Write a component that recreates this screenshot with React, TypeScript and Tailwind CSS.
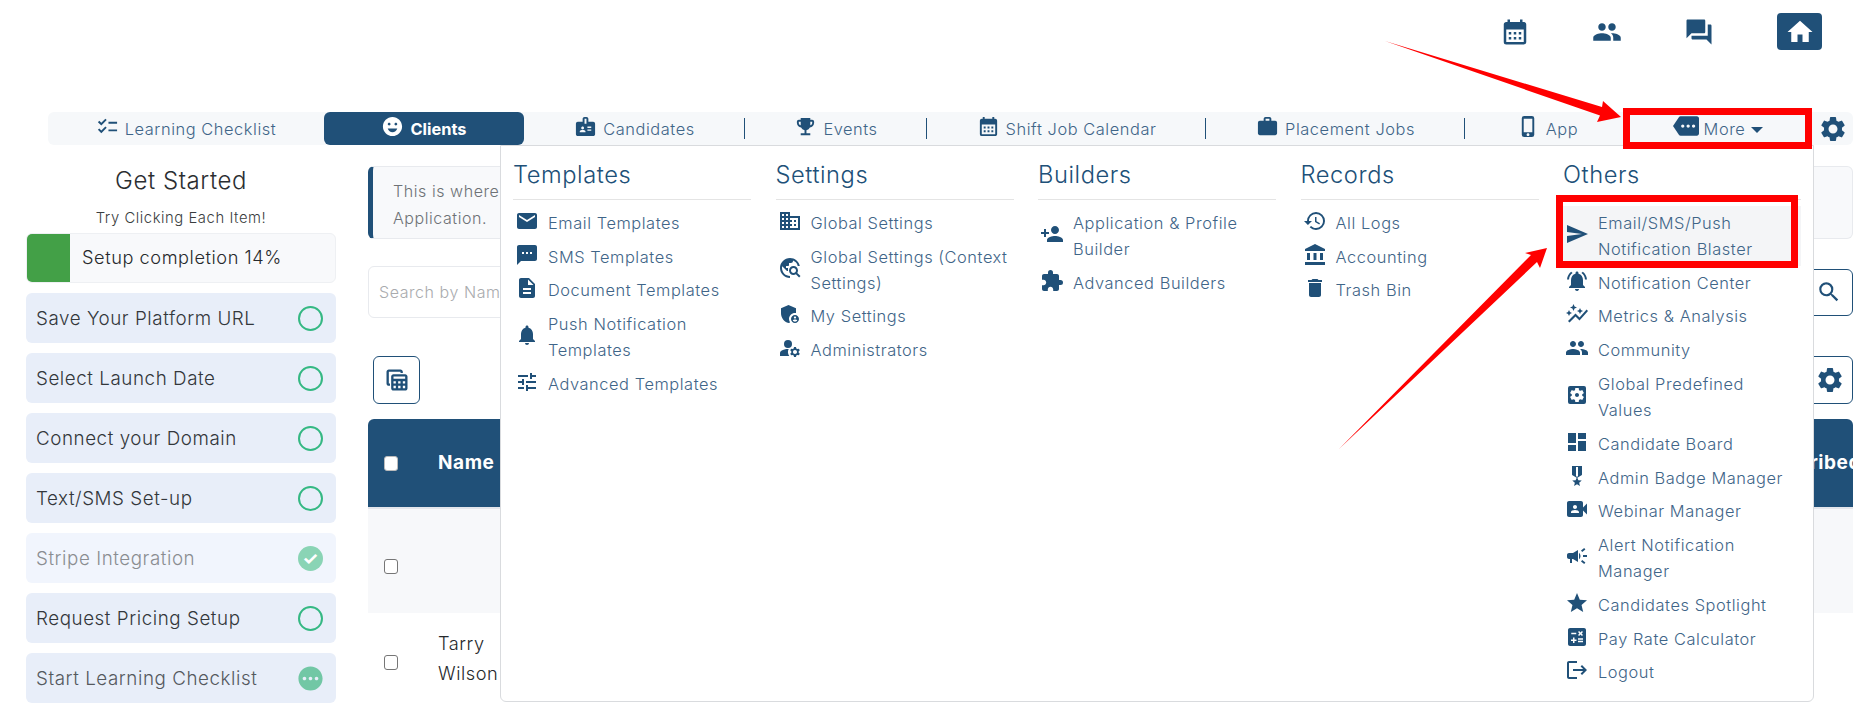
import type { ReactNode } from 'react';
import {
  MdAccountBalance,
  MdAdminPanelSettings,
  MdAutoGraph,
  MdBadge,
  MdCalculate,
  MdCalendarMonth,
  MdCampaign,
  MdChecklist,
  MdDashboard,
  MdDelete,
  MdDescription,
  MdDomain,
  MdEmail,
  MdEmojiEmotions,
  MdEmojiEvents,
  MdExtension,
  MdForum,
  MdHistory,
  MdHome,
  MdLogout,
  MdManageAccounts,
  MdMilitaryTech,
  MdMore,
  MdNotifications,
  MdNotificationsActive,
  MdOutlineTableView,
  MdPending,
  MdPeople,
  MdPersonAdd,
  MdPhoneIphone,
  MdSearch,
  MdSend,
  MdSettings,
  MdSettingsApplications,
  MdSms,
  MdStar,
  MdTravelExplore,
  MdTune,
  MdVideoCameraFront,
  MdWork,
} from 'react-icons/md';

type MenuItem = { icon: ReactNode; label: string; hover?: boolean };

const menu: { title: string; items: MenuItem[] }[] = [
  {
    title: 'Templates',
    items: [
      { icon: <MdEmail />, label: 'Email Templates' },
      { icon: <MdSms />, label: 'SMS Templates' },
      { icon: <MdDescription />, label: 'Document Templates' },
      { icon: <MdNotifications />, label: 'Push Notification Templates' },
      { icon: <MdTune />, label: 'Advanced Templates' },
    ],
  },
  {
    title: 'Settings',
    items: [
      { icon: <MdDomain />, label: 'Global Settings' },
      { icon: <MdTravelExplore />, label: 'Global Settings (Context Settings)' },
      { icon: <MdAdminPanelSettings />, label: 'My Settings' },
      { icon: <MdManageAccounts />, label: 'Administrators' },
    ],
  },
  {
    title: 'Builders',
    items: [
      { icon: <MdPersonAdd />, label: 'Application & Profile Builder' },
      { icon: <MdExtension />, label: 'Advanced Builders' },
    ],
  },
  {
    title: 'Records',
    items: [
      { icon: <MdHistory />, label: 'All Logs' },
      { icon: <MdAccountBalance />, label: 'Accounting' },
      { icon: <MdDelete />, label: 'Trash Bin' },
    ],
  },
  {
    title: 'Others',
    items: [
      { icon: <MdSend />, label: 'Email/SMS/Push Notification Blaster', hover: true },
      { icon: <MdNotificationsActive />, label: 'Notification Center' },
      { icon: <MdAutoGraph />, label: 'Metrics & Analysis' },
      { icon: <MdPeople />, label: 'Community' },
      { icon: <MdSettingsApplications />, label: 'Global Predefined Values' },
      { icon: <MdDashboard />, label: 'Candidate Board' },
      { icon: <MdMilitaryTech />, label: 'Admin Badge Manager' },
      { icon: <MdVideoCameraFront />, label: 'Webinar Manager' },
      { icon: <MdCampaign />, label: 'Alert Notification Manager' },
      { icon: <MdStar />, label: 'Candidates Spotlight' },
      { icon: <MdCalculate />, label: 'Pay Rate Calculator' },
      { icon: <MdLogout />, label: 'Logout' },
    ],
  },
];

const tabs = [
  { icon: <MdChecklist />, label: 'Learning Checklist', width: 'w-[276px]' },
  { icon: <MdEmojiEmotions />, label: 'Clients', width: 'w-[200px]', active: true },
  { icon: <MdBadge />, label: 'Candidates', width: 'w-[221px]', line: true },
  { icon: <MdEmojiEvents />, label: 'Events', width: 'w-[182px]', line: true },
  { icon: <MdCalendarMonth />, label: 'Shift Job Calendar', width: 'w-[279px]', line: true },
  { icon: <MdWork />, label: 'Placement Jobs', width: 'w-[259px]', line: true },
  { icon: <MdPhoneIphone />, label: 'App', width: 'w-[165px]' },
];

const steps = [
  { label: 'Save Your Platform URL', state: 'open' },
  { label: 'Select Launch Date', state: 'open' },
  { label: 'Connect your Domain', state: 'open' },
  { label: 'Text/SMS Set-up', state: 'open' },
  { label: 'Stripe Integration', state: 'done' },
  { label: 'Request Pricing Setup', state: 'open' },
  { label: 'Start Learning Checklist', state: 'pending' },
];

function Step({ label, state }: { label: string; state: string }) {
  return (
    <div
      className={`flex h-[50px] items-center justify-between rounded-md pl-[10px] pr-[13px] text-[18.8px] ${
        state === 'done' ? 'bg-[#f1f5fd] text-[#8a8d91]' : state === 'pending' ? 'bg-[#e8eef9] text-[#55595e]' : 'bg-[#e8eef9] text-[#33373b]'
      }`}
    >
      <span className="pt-[2px]">{label}</span>
      {state === 'open' && <span className="h-[25px] w-[25px] rounded-full border-[2.5px] border-[#35b883]" />}
      {state === 'done' && <span className="flex h-[25px] w-[25px] items-center justify-center rounded-full bg-[#8ad4b5] text-[18px] font-bold text-white">✓</span>}
      {state === 'pending' && <MdPending className="-mx-[2px] text-[29px] text-[#72c7a5]" />}
    </div>
  );
}

function Sidebar() {
  return (
    <aside className="w-[310px] shrink-0">
      <h2 className="mt-[21px] text-center text-[24px] leading-[30px] text-[#2b2e31]">Get Started</h2>
      <p className="mt-[12px] text-center text-[14.8px] leading-[20px] text-[#3a3d40]">Try Clicking Each Item!</p>
      <div className="mb-[10px] mt-[5px] flex h-[50px] items-center overflow-hidden rounded-md border border-[#eef0f3] bg-[#f8f9fb] text-[18.2px] text-[#26292c]">
        <div className="h-full w-[43px] bg-[#43a047]" />
        <span className="ml-3">Setup completion 14%</span>
      </div>
      <div className="flex flex-col gap-[10px]">
        {steps.map((s) => (
          <Step key={s.label} label={s.label} state={s.state} />
        ))}
      </div>
    </aside>
  );
}

function Main() {
  return (
    <main className="ml-[32px] min-w-0 flex-1 pt-[21px]">
      <div className="h-[73px] rounded-md border border-l-[5px] border-[#e8eaee] border-l-[#205078] bg-[#f8f9fb] px-[20px] py-[11px] text-[16px] leading-[27px] text-[#6e7276]">
        This is where you can see each Client's
        <br />
        Application.
      </div>
      <div className="mt-[27px] flex h-[52px] items-center">
        <div className="flex h-full flex-1 items-center rounded-md border border-[#e8eaee] pl-[10px] text-[16px] text-[#a9abae]">Search by Name</div>
        <div className="flex h-[47px] w-[48px] items-center justify-center rounded-md border border-[#205078] text-[26px] text-[#205078]">
          <MdSearch />
        </div>
      </div>
      <div className="mt-[38px] flex h-[48px] items-center justify-between px-[5px] pr-0">
        <div className="flex h-full w-[47px] items-center justify-center rounded-md border border-[#205078] text-[28px] text-[#205078]">
          <MdOutlineTableView />
        </div>
        <div className="flex h-full w-[47px] items-center justify-center rounded-md border border-[#205078] text-[30px] text-[#205078]">
          <MdSettings />
        </div>
      </div>
      <div className="mt-[15px] overflow-hidden rounded-t-md">
        <div className="flex h-[90px] items-center justify-between border-b-2 border-[#e3e6ec] bg-[#205078] pl-[16px] text-[19px] font-bold text-white">
          <div className="flex items-center">
            <span className="h-[15px] w-[14px] rounded-[3px] border border-[#bbb] bg-white" />
            <span className="ml-[40px]">Name</span>
          </div>
          <span className="-mr-[8px]">Subscribed</span>
        </div>
        <div className="flex h-[104px] items-center bg-[#f7f8fa] pl-[16px] pt-[11px]">
          <span className="h-[15px] w-[14px] rounded-[3px] border border-[#767676] bg-white" />
        </div>
        <div className="flex h-[90px] items-center pl-[16px] text-[18.2px] leading-[30px] text-[#26292c]">
          <span className="mt-[8px] h-[15px] w-[14px] rounded-[3px] border border-[#767676] bg-white" />
          <span className="ml-[40px] w-[70px]">Tarry Wilson</span>
        </div>
      </div>
    </main>
  );
}

function MegaMenu() {
  return (
    <div className="absolute left-[500px] top-[145px] flex h-[557px] w-[1314px] justify-between rounded-b-md border border-[#d9dbde] bg-white pl-[12px] pr-[12px]">
      {menu.map((col) => (
        <div key={col.title} className="w-[238px]">
          <h3 className="border-b border-[#e4e4e4] pb-[8px] pt-[13px] text-[23.7px] leading-[32px] text-[#205078]">{col.title}</h3>
          <ul className="mt-[6px]">
            {col.items.map((it) => (
              <li
                key={it.label}
                className={`flex items-center gap-[9px] px-[2px] py-[3.9px] text-[16.4px] leading-[26px] text-[#3f6588] ${it.hover ? 'bg-[#f4f5f7]' : ''}`}
              >
                <span className="-mt-[4px] shrink-0 text-[24px] text-[#205078]">{it.icon}</span>
                <span className="max-w-[200px]">{it.label}</span>
              </li>
            ))}
          </ul>
        </div>
      ))}
    </div>
  );
}

// the two red call-outs drawn on top of the screenshot
function Annotations() {
  return (
    <svg className="pointer-events-none absolute left-0 top-0" width="1860" height="716">
      <polygon points="1385,41 1602,107 1603,101 1621,117 1597,122 1600,115.5" fill="#ff0000" />
      <polygon points="1339,449 1531,255 1525,253 1547,248 1540,268 1537,262" fill="#ff0000" />
      <rect x="1626.5" y="111.5" width="182" height="34" fill="none" stroke="#ff0000" strokeWidth="7" />
      <rect x="1559.5" y="198.5" width="235" height="66" fill="none" stroke="#ff0000" strokeWidth="7" />
    </svg>
  );
}

export default function App() {
  return (
    <div className="relative h-[716px] w-[1860px] overflow-hidden bg-white font-['Inter',sans-serif] font-light tracking-[0.035em]">
      <header className="flex h-[112px] items-start justify-end pr-[38px] pt-[13px] text-[#205078]">
        <div className="flex h-[37px] items-center gap-[62px] text-[30px]">
          <MdCalendarMonth />
          <MdPeople />
          <MdForum />
          <div className="ml-[1px] flex h-[37px] w-[45px] items-center justify-center rounded-[4px] bg-[#205078] text-[30px] text-white">
            <MdHome />
          </div>
        </div>
      </header>

      <nav className="ml-[48px] mr-[7px] flex h-[33px] items-stretch rounded-md bg-[#f6f8fa] text-[16.4px] text-[#3f6588]">
        {tabs.map((t) => (
          <div
            key={t.label}
            className={`relative flex items-center justify-center gap-[6px] ${t.width} ${t.active ? 'rounded-md bg-[#205078] font-bold tracking-normal text-white' : ''}`}
          >
            <span className={`-mt-[5px] text-[23px] ${t.active ? 'text-white' : 'text-[#205078]'}`}>{t.icon}</span>
            <span className="pt-[2px]">{t.label}</span>
            {t.line && <span className="absolute right-0 top-[6px] h-[21px] w-[1px] bg-[#205078]" />}
          </div>
        ))}
        <div className="flex w-[176px] items-center justify-center gap-[5px]">
          <MdMore className="-mt-[5px] text-[26px] text-[#205078]" />
          <span className="pt-[2px]">More</span>
          <span className="ml-[1px] mt-[2px] h-0 w-0 border-x-[6px] border-t-[6px] border-x-transparent border-t-[#205078]" />
        </div>
        <div className="flex flex-1 items-center justify-end pr-[5px] text-[30px] text-[#205078]">
          <MdSettings />
        </div>
      </nav>

      <div className="ml-[26px] mr-[7px] flex">
        <Sidebar />
        <Main />
      </div>

      <MegaMenu />
      <Annotations />
    </div>
  );
}
